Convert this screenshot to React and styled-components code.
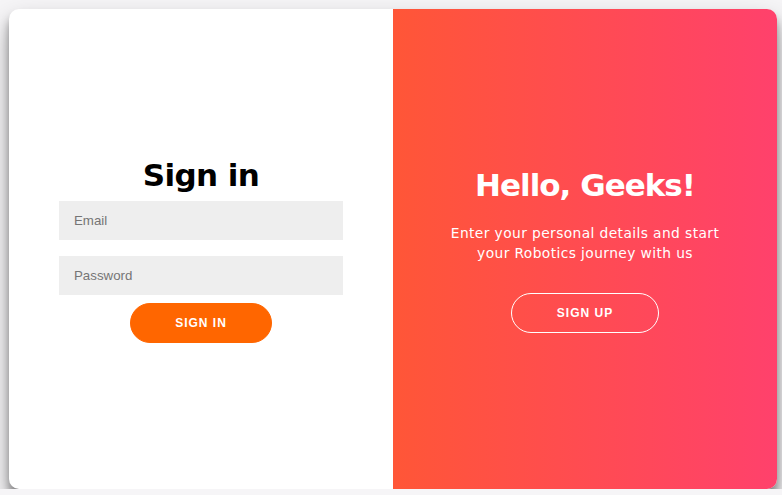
import styled, { createGlobalStyle } from "styled-components"

const GlobalStyle = createGlobalStyle`
    * { box-sizing: border-box; }
    body {
        margin: 0;
        padding: 9px 0 0 9px;
        background: #f6f5f7;
        font-family: "DejaVu Sans", "Open Sans", sans-serif;
        overflow: hidden;
    }
`

const StyledContainer = styled.div`
    width: 768px;
    height: 480px;
    background: #ffffff;
    border-radius: 10px;
    box-shadow: 0 14px 28px rgba(0, 0, 0, 0.3), 0 8px 8px rgba(0, 0, 0, 0.35);
    display: grid;
    grid-template-columns: 1fr 1fr;
    overflow: hidden;
`
const StyledForm = styled.form`
    display: flex;
    flex-direction: column;
    align-items: center;
    justify-content: center;
    padding: 1px 50px 0;
    text-align: center;
`
const StyledTitle = styled.h1`
    margin: 0;
    font-size: 31px;
    font-weight: 700;
    letter-spacing: ${props => props.$light ? "-1px" : "-0.6px"};
    color: ${props => props.$light ? "#FFFFFF" : "#000000"};
`
const StyledInput = styled.input`
    width: 100%;
    height: 39px;
    margin: 8px 0;
    padding: 12px 15px;
    border: none;
    background: #eeeeee;
    font-family: "Liberation Sans", Arial, sans-serif;
    font-size: 13.3px;
    outline: none;
    &::placeholder { color: #757575; }
`
const StyledButton = styled.button`
    height: 40px;
    border-radius: 20px;
    border: 1px solid ${props => props.$ghost ? "#FFFFFF" : "#FF6600"};
    background: ${props => props.$ghost ? "transparent" : "#FF6600"};
    color: #FFFFFF;
    font-family: "Liberation Sans", Arial, sans-serif;
    font-size: 12px;
    font-weight: 700;
    letter-spacing: 1px;
    text-transform: uppercase;
    padding: 0 ${props => props.$ghost ? "45px" : "44px"};
`
const StyledPanel = styled.div`
    background: linear-gradient(to right, #FF5637, #FF416C);
    color: #FFFFFF;
    display: flex;
    flex-direction: column;
    align-items: center;
    justify-content: center;
    padding: 1px 50px 0;
    text-align: center;
`
const StyledParagraph = styled.p`
    font-size: 13.8px;
    font-weight: 400;
    line-height: 20px;
    letter-spacing: 0.4px;
    margin: 20px 0 30px;
`

const App = () => {
    return(
        <>
            <GlobalStyle />
            <StyledContainer>
                <StyledForm onSubmit={e => e.preventDefault()}>
                    <StyledTitle>Sign in</StyledTitle>
                    <StyledInput type="email" placeholder="Email" />
                    <StyledInput type="password" placeholder="Password" />
                    <StyledButton>Sign In</StyledButton>
                </StyledForm>
                <StyledPanel>
                    <StyledTitle $light>Hello, Geeks!</StyledTitle>
                    <StyledParagraph>Enter your personal details and start your Robotics journey with us</StyledParagraph>
                    <StyledButton $ghost>Sign Up</StyledButton>
                </StyledPanel>
            </StyledContainer>
        </>
    )
}

export default App
